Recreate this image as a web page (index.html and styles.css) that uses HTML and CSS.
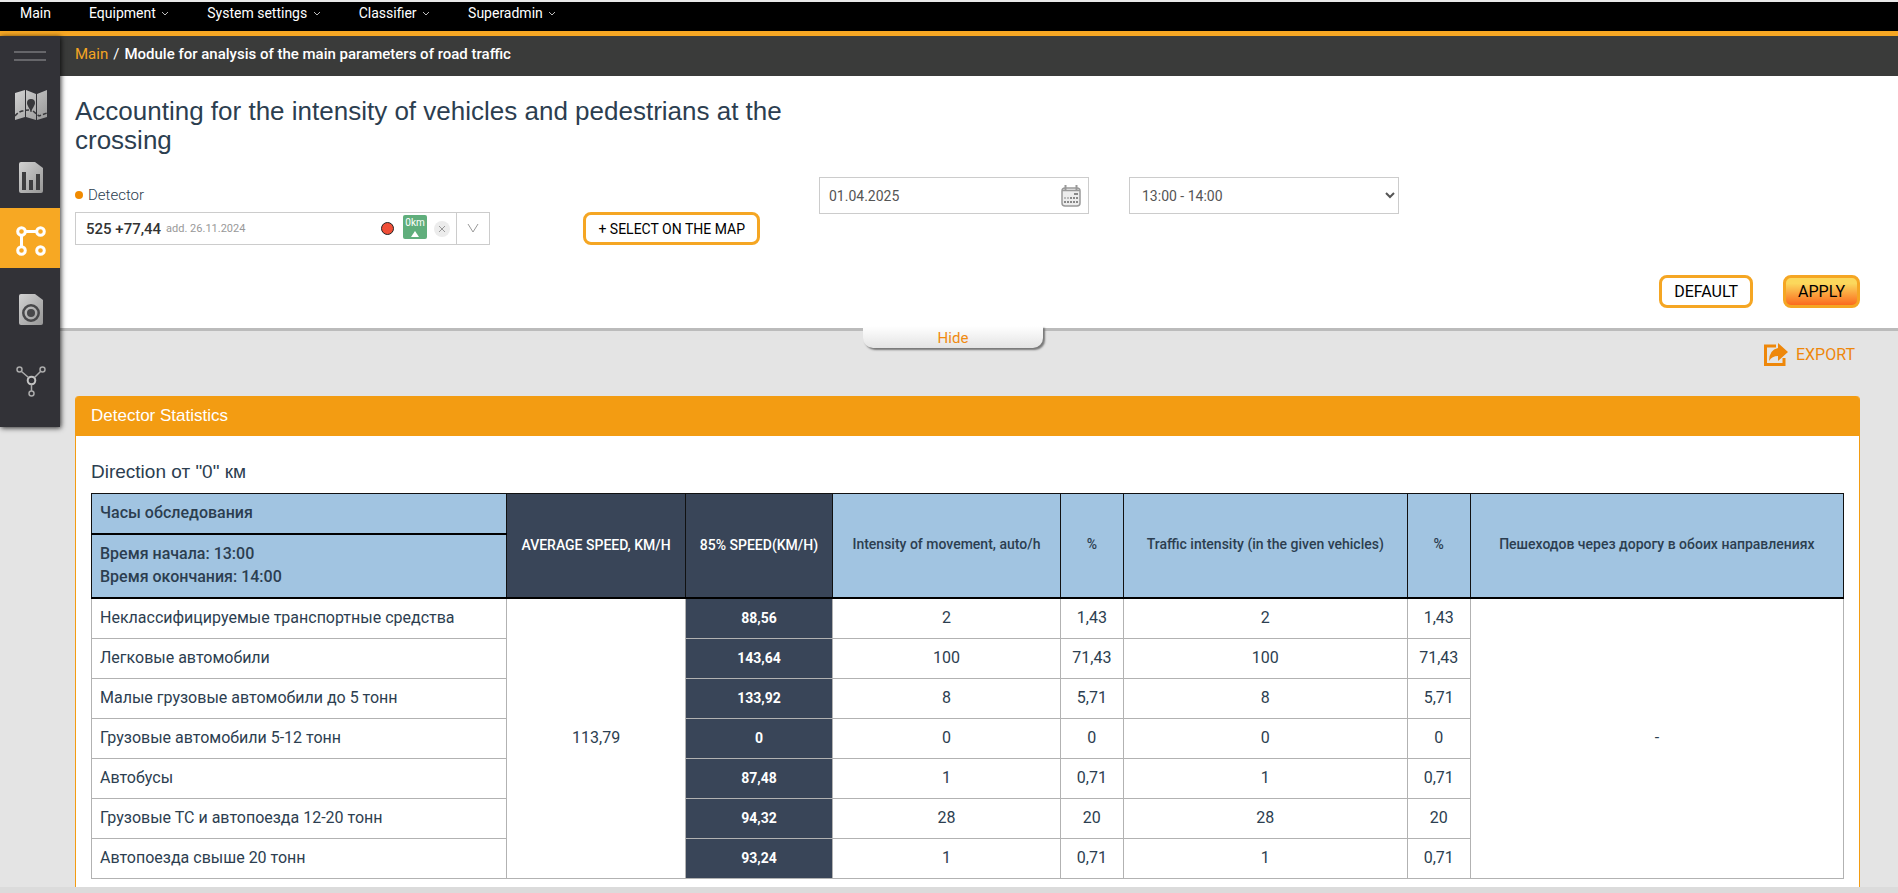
FILE: index.html
```html
<!DOCTYPE html>
<html lang="en">
<head>
  <meta charset="UTF-8">
  <title>Accounting for the intensity of vehicles</title>
  <link rel="stylesheet" href="styles.css">
</head>
<body>
  <nav class="topbar">
    <a href="#">Main</a>
    <a href="#">Equipment <svg class="chevron" viewBox="0 0 8 6"><path d="M1 1l3 3 3-3"/></svg></a>
    <a href="#">System settings <svg class="chevron" viewBox="0 0 8 6"><path d="M1 1l3 3 3-3"/></svg></a>
    <a href="#">Classifier <svg class="chevron" viewBox="0 0 8 6"><path d="M1 1l3 3 3-3"/></svg></a>
    <a href="#">Superadmin <svg class="chevron" viewBox="0 0 8 6"><path d="M1 1l3 3 3-3"/></svg></a>
  </nav>

  <div class="layout">
    <aside class="sidebar">
      <button type="button" class="burger" aria-label="Menu"></button>
      <a href="#" aria-label="Map">
        <svg width="32" height="30" viewBox="0 0 32 30">
          <defs>
            <linearGradient id="silver" x1="0" y1="0" x2="1" y2="1">
              <stop offset="0" stop-color="#d2d2d2"/>
              <stop offset="1" stop-color="#979797"/>
            </linearGradient>
          </defs>
          <path fill="url(#silver)" d="M0 3L10 0v27L0 30zM11 0l10 4v26l-10-3zM22 4l10-4v27l-10 3z"/>
          <path fill="#38383b" d="M16 9a4 4 0 0 1 4 4c0 3-3 5-3.500 9h-1c-.5-4-3.500-6-3.500-9a4 4 0 0 1 4-4z"/>
          <path fill="none" stroke="#38383b" stroke-width="1.500" stroke-dasharray="4 2" d="M0 26q3-4 7-5t7-1M18 21l6 5 8-3"/>
        </svg>
      </a>
      <a href="#" aria-label="Reports">
        <svg width="24" height="31" viewBox="0 0 24 31">
          <path fill="url(#silver)" d="M2 0h14l8 6v23a2 2 0 0 1-2 2H2a2 2 0 0 1-2-2V2a2 2 0 0 1 2-2z"/>
          <path fill="#3d3d3f" d="M3 10h4v18H3zM10 18h4v10h-4zM17 12h4v16h-4z"/>
        </svg>
      </a>
      <a href="#" class="active" aria-label="Road traffic analysis">
        <svg width="30" height="30" viewBox="0 0 30 30" fill="none" stroke="#fff" stroke-width="3">
          <circle cx="5.500" cy="5.500" r="3.800"/>
          <circle cx="24.500" cy="5.500" r="3.800"/>
          <circle cx="5.500" cy="24.500" r="3.800"/>
          <circle cx="24.500" cy="24.500" r="3.800"/>
          <path d="M9 5.500h12M5.500 9v12"/>
        </svg>
      </a>
      <a href="#" aria-label="Video">
        <svg width="24" height="31" viewBox="0 0 24 31">
          <path fill="url(#silver)" d="M2 0h14l8 6v23a2 2 0 0 1-2 2H2a2 2 0 0 1-2-2V2a2 2 0 0 1 2-2z"/>
          <circle cx="12" cy="19" r="7.700" fill="none" stroke="#48484a" stroke-width="2.500"/>
          <circle cx="12" cy="19" r="4" fill="#48484a"/>
        </svg>
      </a>
      <a href="#" aria-label="Network">
        <svg width="30" height="31" viewBox="0 0 30 31" fill="none" stroke="#aaa" stroke-width="1.500">
          <circle cx="3.500" cy="3.500" r="2.500"/>
          <circle cx="26.500" cy="3.500" r="2.500"/>
          <circle cx="15.500" cy="27.500" r="2.500"/>
          <circle cx="15.500" cy="14.500" r="3.800" stroke="#c4c4c4" stroke-width="2"/>
          <path d="M5.500 5.500l7 6M24.500 5.500l-6 6M15.500 18.500v6.500"/>
        </svg>
      </a>
    </aside>

    <main class="main">
      <div class="breadcrumbs">
        <a href="#">Main</a><span class="sep">/</span><span class="current">Module for analysis of the main parameters of road traffic</span>
      </div>

      <form class="filter">
        <div class="filter-grid">
          <div class="filter-left">
            <h1>Accounting for the intensity of vehicles and pedestrians at the crossing</h1>
            <div class="detector-label" id="detectorLabel">Detector</div>
            <div class="detector-row">
              <div class="detector" role="combobox" aria-expanded="false" aria-labelledby="detectorLabel">
                <span class="detector-name">525 +77,44</span>
                <span class="detector-date">add. 26.11.2024</span>
                <span class="detector-state"></span>
                <span class="detector-km">0km<svg width="8" height="6" viewBox="0 0 8 6"><path fill="#fff" d="M4 0l4 6H0z"/></svg></span>
                <button type="button" class="detector-clear" aria-label="Clear"><svg width="8" height="8" viewBox="0 0 8 8"><path d="M1 1l6 6M7 1L1 7"/></svg></button>
                <button type="button" class="detector-open" aria-label="Open list"><svg width="12" height="10" viewBox="0 0 12 10"><path d="M1 1l5 8 5-8"/></svg></button>
              </div>
              <button type="button" class="btn btn-small">+ SELECT ON THE MAP</button>
            </div>
          </div>
          <div class="field">
            <input type="text" value="01.04.2025" aria-label="Date">
            <svg class="calendar" width="20" height="22" viewBox="0 0 20 22">
              <rect x="1" y="3" width="18" height="18" rx="3" fill="#ececec" stroke="#999" stroke-width="1.500"/>
              <path stroke="#999" stroke-width="1.500" d="M1 5.500h18"/>
              <path stroke="#999" stroke-width="2" d="M4.500 0v6M15.500 0v6"/>
              <path fill="#888" d="M13 8h4v2h-4zM9 12h2v2H9zM12 12h2v2h-2zM15 12h2v2h-2zM3 16h2v2H3zM6 16h2v2H6zM9 16h2v2H9zM12 16h2v2h-2zM15 16h2v2h-2z"/>
              <path fill="#bbb" d="M3 12h2v2H3zM6 12h2v2H6z"/>
            </svg>
          </div>
          <div class="field">
            <select aria-label="Time">
              <option>13:00 - 14:00</option>
            </select>
          </div>
        </div>
        <div class="filter-actions">
          <button type="reset" class="btn">DEFAULT</button>
          <button type="submit" class="btn btn-apply">APPLY</button>
        </div>
        <button type="button" class="hide-tab">Hide</button>
      </form>

      <div class="export">
        <a href="#">
          <svg width="24" height="24" viewBox="0 0 24 24">
            <path fill="none" stroke="#ee870a" stroke-width="3" d="M12 3H1.500v18.500H20V15"/>
            <path fill="#ee870a" d="M14 0l10 9-10 9v-5q-6 0-9 5 0-11 9-13z"/>
          </svg>
          EXPORT
        </a>
      </div>

      <section class="panel">
        <h2>Detector Statistics</h2>
        <div class="panel-body">
          <h3>Direction от "0" км</h3>
          <table class="stats">
            <colgroup>
              <col class="c-name"><col class="c-avg"><col class="c-85"><col class="c-int"><col class="c-pct"><col class="c-traffic"><col class="c-pct"><col>
            </colgroup>
            <thead>
              <tr>
                <th class="hours">Часы обследования</th>
                <th rowspan="2" class="dark">AVERAGE SPEED, KM/H</th>
                <th rowspan="2" class="dark">85% SPEED(KM/H)</th>
                <th rowspan="2">Intensity of movement, auto/h</th>
                <th rowspan="2">%</th>
                <th rowspan="2">Traffic intensity (in the given vehicles)</th>
                <th rowspan="2">%</th>
                <th rowspan="2">Пешеходов через дорогу в обоих направлениях</th>
              </tr>
              <tr>
                <th class="hours">Время начала: 13:00<br>Время окончания: 14:00</th>
              </tr>
            </thead>
            <tbody>
              <tr>
                <td class="name">Неклассифицируемые транспортные средства</td>
                <td rowspan="7">113,79</td>
                <td class="dark">88,56</td><td>2</td><td>1,43</td><td>2</td><td>1,43</td>
                <td rowspan="7">-</td>
              </tr>
              <tr><td class="name">Легковые автомобили</td><td class="dark">143,64</td><td>100</td><td>71,43</td><td>100</td><td>71,43</td></tr>
              <tr><td class="name">Малые грузовые автомобили до 5 тонн</td><td class="dark">133,92</td><td>8</td><td>5,71</td><td>8</td><td>5,71</td></tr>
              <tr><td class="name">Грузовые автомобили 5-12 тонн</td><td class="dark">0</td><td>0</td><td>0</td><td>0</td><td>0</td></tr>
              <tr><td class="name">Автобусы</td><td class="dark">87,48</td><td>1</td><td>0,71</td><td>1</td><td>0,71</td></tr>
              <tr><td class="name">Грузовые ТС и автопоезда 12-20 тонн</td><td class="dark">94,32</td><td>28</td><td>20</td><td>28</td><td>20</td></tr>
              <tr><td class="name">Автопоезда свыше 20 тонн</td><td class="dark">93,24</td><td>1</td><td>0,71</td><td>1</td><td>0,71</td></tr>
            </tbody>
          </table>
        </div>
      </section>
    </main>
  </div>
  <footer class="bottom-line"></footer>
</body>
</html>
```

FILE: styles.css
```css
* {
  box-sizing: border-box;
}

body {
  margin: 0;
  min-height: 100vh;
  display: flex;
  flex-direction: column;
  font-family: Roboto, "Liberation Sans", sans-serif;
  font-size: 16px;
  color: #2c3e50;
  background-color: #e4e4e4;
}

a {
  color: inherit;
  text-decoration: none;
}

button, input, select {
  font-family: inherit;
}

/* top menu */
.topbar {
  display: flex;
  gap: 38px;
  height: 36px;
  padding: 0 20px;
  background-color: #000;
  border-top: 2px solid #e8e8e8;
  border-bottom: 5px solid #f5a623;
  color: #fff;
  font-size: 14px;
  line-height: 22px;
}

.chevron {
  width: 8px;
  height: 6px;
  margin-left: 2px;
  vertical-align: middle;
  fill: none;
  stroke: #bbb;
}

.layout {
  display: flex;
  flex: 1;
}

/* sidebar */
.sidebar {
  position: relative;
  z-index: 1;
  flex: none;
  align-self: flex-start;
  display: flex;
  flex-direction: column;
  width: 60px;
  padding-bottom: 4px;
  background-color: #323237;
  box-shadow: 1px 1px 5px rgba(0, 0, 0, 0.8);
}

.sidebar a {
  display: flex;
  justify-content: center;
  align-items: center;
  height: 60px;
  margin-bottom: 12px;
  padding-left: 2px;
}

.sidebar .active {
  margin-top: -11px;
  margin-bottom: 11px;
  padding-top: 5px;
  background-color: #f7a823;
}

.burger {
  width: 32px;
  height: 10px;
  margin: 15px 14px 14px;
  padding: 0;
  border: solid #66666a;
  border-width: 2px 0;
  background: none;
}

.main {
  flex: 1;
  min-width: 0;
  display: flex;
  flex-direction: column;
}

.breadcrumbs {
  height: 40px;
  padding-left: 15px;
  background-color: #3a3b3a;
  color: #fff;
  font-size: 15px;
  line-height: 36px;
}

.breadcrumbs a {
  color: #f5a623;
}

.sep {
  margin: 0 5px;
}

.current {
  font-weight: 500;
}

/* filter */
.filter {
  position: relative;
  padding: 21px 38px 20px 15px;
  background-color: #fff;
  border-bottom: 3px solid #bbb;
}

.filter-grid {
  display: grid;
  grid-template-columns: 744fr 310fr 310fr 421fr;
}

.filter-left {
  padding-right: 30px;
}

h1, h2, h3 {
  margin: 0;
  font-family: "Liberation Sans", Arial, sans-serif;
  font-weight: 400;
}

h1 {
  font-size: 26px;
  line-height: 29px;
}

.detector-label {
  display: flex;
  align-items: center;
  gap: 5px;
  margin-top: 30px;
  font-size: 15px;
  font-weight: 300;
  line-height: 20px;
}

.detector-label::before {
  content: "";
  width: 8px;
  height: 8px;
  border-radius: 50%;
  background-color: #f08a00;
}

.detector-row {
  display: flex;
  justify-content: space-between;
  padding-right: 29px;
  margin-top: 7px;
}

.detector {
  display: flex;
  align-items: center;
  width: 415px;
  height: 33px;
  padding-left: 10px;
  border: 1px solid #ccc;
}

.detector-name {
  color: #333;
  font-size: 15px;
  font-weight: 500;
}

.detector-date {
  flex: 1;
  margin-left: 5px;
  color: #999;
  font-size: 11px;
}

.detector-state {
  width: 13px;
  height: 13px;
  border: 1px solid #222;
  border-radius: 50%;
  background-color: #f04e37;
}

.detector-km {
  display: flex;
  flex-direction: column;
  align-items: center;
  gap: 2px;
  width: 24px;
  height: 24px;
  margin: 0 7px 3px 9px;
  padding-top: 2px;
  border-radius: 2px;
  background-color: #60ae7c;
  color: #fff;
  font-size: 10px;
  line-height: 12px;
}

.detector-clear {
  display: flex;
  justify-content: center;
  align-items: center;
  width: 16px;
  height: 16px;
  padding: 0;
  border: 0;
  border-radius: 50%;
  background-color: #ececec;
}

.detector-open {
  width: 33px;
  height: 31px;
  margin-left: 6px;
  padding: 0;
  border: 0;
  border-left: 1px solid #ccc;
  background: none;
}

.detector button path {
  fill: none;
  stroke: #999;
}

.field {
  position: relative;
  padding: 80px 40px 0 0;
}

.field input, .field select {
  width: 100%;
  height: 37px;
  padding: 0 8px;
  border: 1px solid #ccc;
  border-radius: 0;
  background-color: #fff;
  color: #555;
  font-size: 14px;
}

.field input {
  padding: 0 9px;
}

.calendar {
  position: absolute;
  top: 88px;
  right: 48px;
}

.filter-actions {
  display: flex;
  justify-content: flex-end;
  gap: 30px;
  margin-top: 30px;
}

.btn {
  height: 33px;
  padding: 0 12px;
  border: 3px solid #f5a623;
  border-radius: 8px;
  background-color: #fff;
  color: #000;
  font-size: 16px;
}

.btn-small {
  font-size: 14px;
}

.btn-apply {
  background-image: linear-gradient(#fbd85c 20%, #fb6a1e);
}

.hide-tab {
  position: absolute;
  left: 50%;
  bottom: -20px;
  width: 180px;
  height: 22px;
  margin-left: -116px;
  padding: 2px 0 0;
  border: 0;
  border-radius: 0 0 10px 10px;
  background-image: linear-gradient(#fff, #e4e4e4);
  box-shadow: 2px 2px 2px #777;
  color: #f08a10;
  font-size: 15px;
}

.export {
  display: flex;
  justify-content: flex-end;
  padding: 11px 43px 29px;
  color: #ee870a;
}

.export a {
  display: flex;
  align-items: center;
  gap: 8px;
  height: 25px;
}

/* statistics */
.panel {
  flex: 1;
  margin: 0 38px 0 15px;
  border: 1px solid #f39c12;
  border-width: 0 1px;
  border-radius: 4px 4px 0 0;
  background-color: #fff;
}

.panel h2 {
  padding: 0 15px;
  border-radius: 3px 3px 0 0;
  background-color: #f39c12;
  color: #fff;
  font-size: 17px;
  line-height: 40px;
}

.panel-body {
  padding: 24px 15px 8px;
}

.panel h3 {
  margin-bottom: 9px;
  font-size: 19px;
  line-height: 24px;
}

.stats {
  width: 100%;
  table-layout: fixed;
  border-collapse: collapse;
  line-height: 23px;
  text-align: center;
}

.c-name { width: 23.7%; }
.c-avg { width: 10.2%; }
.c-85 { width: 8.4%; }
.c-int { width: 13%; }
.c-pct { width: 3.6%; }
.c-traffic { width: 16.2%; }

.stats th {
  padding: 7px 8px 9px;
  border: 1px solid #111;
  border-bottom: 2px solid #000;
  background-color: #a1c4e1;
  font-size: 14px;
  font-weight: 500;
}

.stats td {
  height: 40px;
  padding: 0 8px 2px;
  border: 1px solid #b2b2b2;
}

.stats .hours {
  font-size: 16px;
  text-align: left;
}

.stats .name {
  text-align: left;
}

.stats .dark {
  padding: 0;
  background-color: #394558;
  color: #fff;
  font-size: 14px;
}

.stats td.dark {
  font-weight: 700;
}

.bottom-line {
  height: 6px;
  background-color: #dbdbdb;
}
```
